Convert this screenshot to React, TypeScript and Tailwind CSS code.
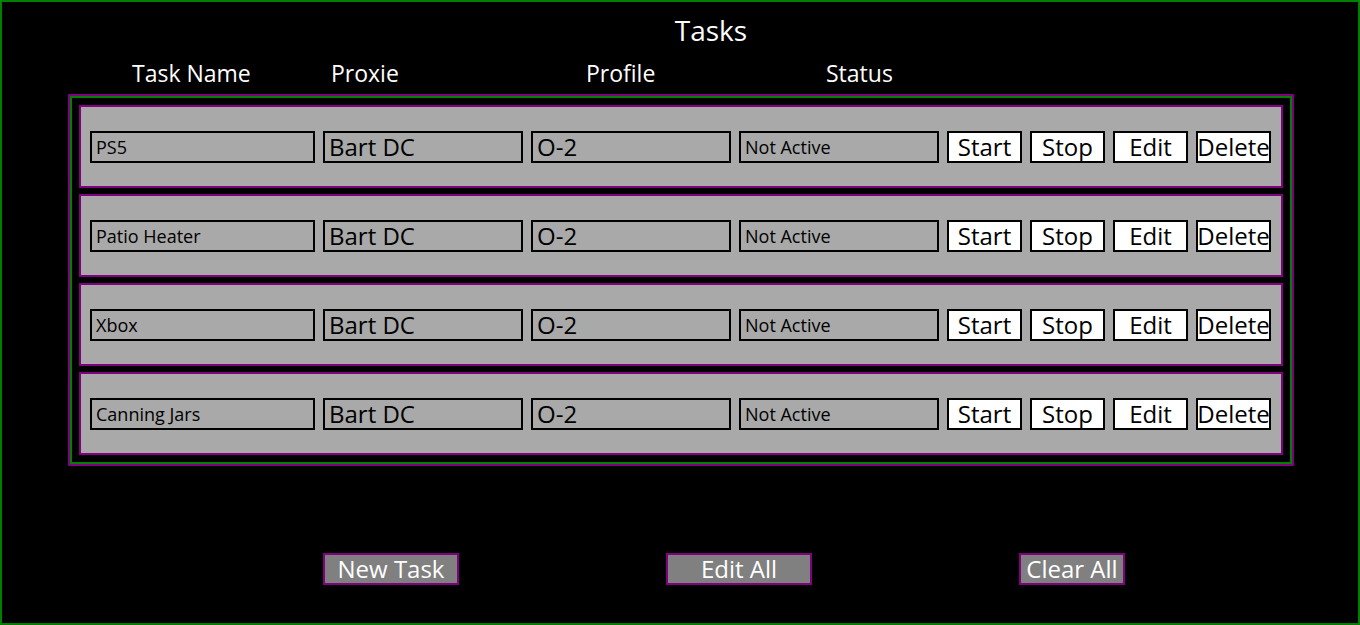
import React from "react";

const tasks = ["PS5", "Patio Heater", "Xbox", "Canning Jars"];

function Field({ children, big }: { children: React.ReactNode; big?: boolean }) {
  return (
    <div
      className={
        "h-[32px] border-2 border-black bg-[#a9a9a9] flex items-center pl-[4px] text-black whitespace-nowrap overflow-hidden leading-none " +
        (big ? "text-[24px]" : "text-[18px]")
      }
    >
      {children}
    </div>
  );
}

function Btn({ label }: { label: string }) {
  return (
    <div className="w-[75px] h-[32px] border-2 border-black bg-white flex items-center justify-center text-[24px] leading-none text-black whitespace-nowrap">
      {label}
    </div>
  );
}

export default function App() {
  return (
    <div
      className="w-[1360px] h-[625px] bg-black border-2 border-[#008000] flex flex-col"
      style={{ fontFamily: "'Open Sans', 'Noto Sans', sans-serif" }}
    >
      <div className="h-[56px] pl-[62px] flex items-center justify-center text-white text-[28px] leading-none">
        Tasks
      </div>
      <div className="h-[30px] flex items-center text-white text-[23px] leading-none pl-[130px]">
        <span className="w-[199px]">Task Name</span>
        <span className="w-[255px]">Proxie</span>
        <span className="w-[240px]">Profile</span>
        <span>Status</span>
      </div>
      <div className="mt-[6px] ml-[66px] w-[1226px] border-2 border-[#800080]">
        <div className="border-2 border-[#008000] p-[7px] flex flex-col gap-[6px]">
          {tasks.map((t) => (
            <div
              key={t}
              className="h-[83px] border-2 border-[#800080] bg-[#a9a9a9] flex items-center pl-[9px] gap-[8px]"
            >
              <div className="w-[225px]">
                <Field>{t}</Field>
              </div>
              <div className="w-[200px]">
                <Field big>Bart DC</Field>
              </div>
              <div className="w-[200px]">
                <Field big>O-2</Field>
              </div>
              <div className="w-[200px]">
                <Field>Not Active</Field>
              </div>
              <Btn label="Start" />
              <Btn label="Stop" />
              <Btn label="Edit" />
              <Btn label="Delete" />
            </div>
          ))}
        </div>
      </div>
      <div className="mt-[87px] ml-[321px] flex gap-[207px] text-white text-[24px] leading-none">
        <div className="w-[136px] h-[32px] border-2 border-[#800080] bg-[#808080] flex items-center justify-center">
          New Task
        </div>
        <div className="w-[146px] h-[32px] border-2 border-[#800080] bg-[#808080] flex items-center justify-center">
          Edit All
        </div>
        <div className="w-[106px] h-[32px] border-2 border-[#800080] bg-[#808080] flex items-center justify-center">
          Clear All
        </div>
      </div>
    </div>
  );
}
